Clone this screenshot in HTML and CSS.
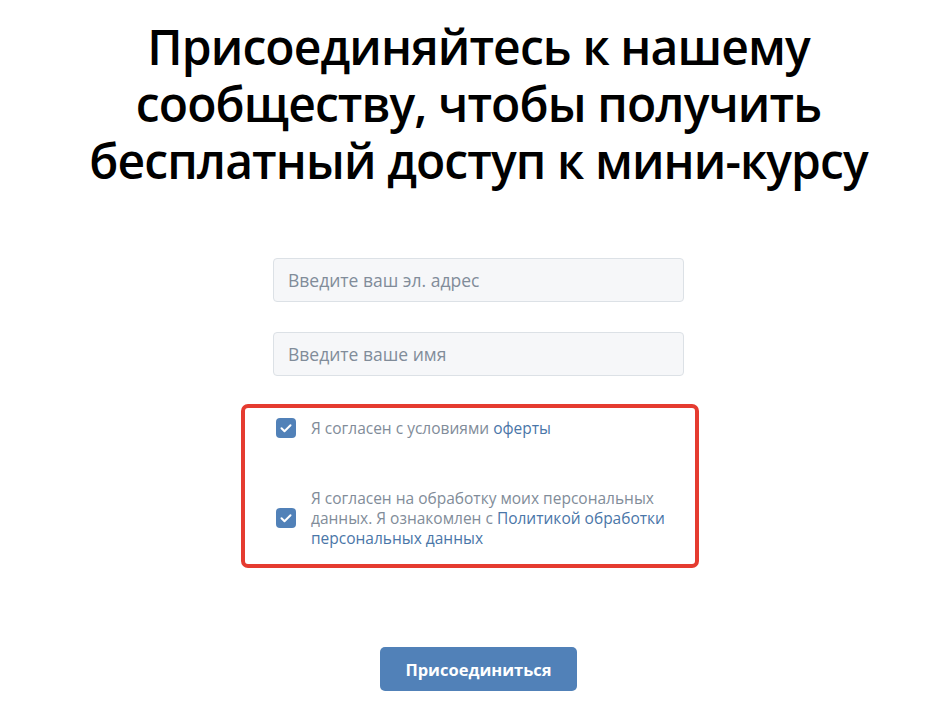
FILE: index.html
```html
<!DOCTYPE html>
<html lang="ru">
<head>
<meta charset="utf-8">
<title>Присоединяйтесь</title>
<link rel="stylesheet" href="styles.css">
</head>
<body>
<main class="page">
  <h1 class="title">Присоединяйтесь к нашему сообществу, чтобы получить бесплатный доступ к мини-курсу</h1>
  <form class="form">
    <input class="field" type="email" placeholder="Введите ваш эл. адрес">
    <input class="field" type="text" placeholder="Введите ваше имя">
    <div class="agree">
      <label class="check">
        <span class="box"><svg viewBox="0 0 20 20" width="20" height="20"><path d="M5.5 10.2l3 3 6-6" fill="none" stroke="#fff" stroke-width="2" stroke-linecap="round" stroke-linejoin="round"/></svg></span>
        <span class="label">Я согласен с условиями <a href="#" class="link">оферты</a></span>
      </label>
      <label class="check">
        <span class="box"><svg viewBox="0 0 20 20" width="20" height="20"><path d="M5.5 10.2l3 3 6-6" fill="none" stroke="#fff" stroke-width="2" stroke-linecap="round" stroke-linejoin="round"/></svg></span>
        <span class="label">Я согласен на обработку моих персональных данных. Я ознакомлен с <a href="#" class="link">Политикой обработки персональных данных</a></span>
      </label>
    </div>
    <button class="submit" type="button">Присоединиться</button>
  </form>
</main>
</body>
</html>
```
FILE: styles.css
```css
* { box-sizing: border-box; }
html, body { margin: 0; padding: 0; background: #fff; }
body { font-family: "Open Sans", "Noto Sans", Arial, sans-serif; }
.page {
  padding: 18px 0 0 15px;
  display: flex;
  flex-direction: column;
  align-items: center;
}
.title {
  margin: 0;
  width: 820px;
  text-align: center;
  font-size: 48px;
  line-height: 57px;
  font-weight: 600;
  color: #000;
  letter-spacing: -0.9px;
}
.form {
  margin-top: 69px;
  width: 411px;
  display: flex;
  flex-direction: column;
}
.field {
  height: 44px;
  border: 1px solid #dce1e6;
  border-radius: 4px;
  background: #f6f7f9;
  padding: 0 14px;
  font-family: inherit;
  font-size: 17.5px;
  color: #000;
  margin-bottom: 30px;
}
.field::placeholder { color: #818c99; }
.agree {
  margin: -2px -15px 0 -32px;
  border: 4px solid #e53b30;
  border-radius: 7px;
  padding: 10px 8px 16px 31px;
  display: flex;
  flex-direction: column;
  gap: 50px;
}
.check {
  display: flex;
  align-items: center;
  gap: 15px;
  font-size: 15.5px;
  line-height: 20px;
  color: #818c99;
}
.label { max-width: 380px; }
.box {
  flex: none;
  width: 20px;
  height: 20px;
  border-radius: 4px;
  background: #5181b8;
  display: flex;
}
.link { color: #4a76a8; text-decoration: none; }
.submit {
  align-self: center;
  margin-top: 79px;
  width: 197px;
  height: 44px;
  border: none;
  border-radius: 5px;
  background: #5181b8;
  color: #fff;
  font-family: inherit;
  font-size: 16.5px;
  font-weight: 700;
}
```
